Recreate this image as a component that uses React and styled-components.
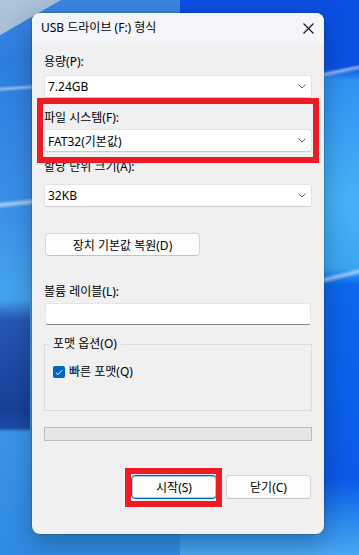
import React from 'react'
import styled, { createGlobalStyle } from 'styled-components'

const GlobalStyle = createGlobalStyle`
  html, body { margin: 0; padding: 0; }
  body { font-family: "Noto Sans", "Noto Sans CJK KR", sans-serif; }
`;

const Desktop = styled.div`
  width: 359px;
  height: 555px;
  overflow: hidden;
  box-sizing: border-box;
  padding: 13px 35px 0 32px;
  background:
    linear-gradient(150deg, #b4c6d8 0, #a6bed8 30px, transparent 31px),
    linear-gradient(176deg, transparent 86px, rgba(255,255,255,0.45) 89px, transparent 92px) left top / 32px 100% no-repeat,
    linear-gradient(174deg, transparent 200px, rgba(255,255,255,0.55) 204px, transparent 208px) left top / 32px 100% no-repeat,
    linear-gradient(to bottom, transparent 300px, #2656b4 320px, #173f98 410px, #1d4aa5 428px, transparent 432px) left top / 30px 100% no-repeat,
    linear-gradient(168deg, transparent 70px, rgba(255,255,255,0.5) 73px, transparent 77px) right top / 36px 100% no-repeat,
    linear-gradient(166deg, transparent 268px, rgba(255,255,255,0.5) 272px, transparent 276px) right top / 36px 100% no-repeat,
    linear-gradient(to bottom, #3b86e2 0, #2d7ddf 60px, #3a8ee8 200px, #45a2ee 290px, #3a95e8 430px, #2f8ae2 555px) left top / 180px 100% no-repeat,
    linear-gradient(to bottom, #0b4fe0 0, #0a52e2 68px, #2f92f2 80px, #45b2f7 200px, #3aa6f3 268px, #0d66ec 285px, #0a5ae8 480px, #2a88ee 520px, #49a6f0 555px) right top / 180px 100% no-repeat;
`;

const Dialog = styled.div`
  width: 292px;
  height: 521px;
  display: flex;
  flex-direction: column;
  background: #f0f0f0;
  border-radius: 8px;
  overflow: hidden;
  box-shadow: 0 8px 24px rgba(0, 0, 0, 0.28), 0 0 0 1px rgba(0, 0, 0, 0.12);
  font-size: 12px;
  color: #000;
`;

const TitleBar = styled.div`
  height: 30px;
  flex-shrink: 0;
  display: flex;
  align-items: center;
  justify-content: space-between;
  padding: 0 10px 0 9px;
  background: #f3f5f8;
  line-height: 16px;
`;

const Body = styled.div`
  flex: 1;
  display: flex;
  flex-direction: column;
  padding: 11px 12px 0 12px;
`;

const Label = styled.div`
  line-height: 16px;
  margin-top: ${p => p.$mt || 0}px;
  margin-bottom: ${p => p.$mb || 0}px;
  white-space: nowrap;
`;

const Select = styled.div`
  height: 23px;
  box-sizing: border-box;
  display: flex;
  align-items: center;
  justify-content: space-between;
  padding: 0 5px 0 3px;
  background: #fff;
  border: 1px solid #e3e3e3;
  border-bottom-color: #cdcdcd;
  border-radius: 3px;
`;

const Highlight = styled.div`
  position: relative;
  margin-top: ${p => p.$mt || 0}px;

  &::after {
    content: '';
    position: absolute;
    left: ${p => p.$l}px;
    right: ${p => p.$r}px;
    top: ${p => p.$t}px;
    bottom: ${p => p.$b}px;
    border: 6px solid #ed1c24;
    pointer-events: none;
    z-index: 1;
  }
`;

const Button = styled.button`
  height: ${p => p.$h || 24}px;
  width: ${p => p.$w}px;
  box-sizing: border-box;
  padding: 0;
  font: inherit;
  color: #000;
  background: #fdfdfd;
  border: 1px solid #d6d6d6;
  border-bottom-color: #c2c2c2;
  border-radius: 4px;
  ${p => p.$primary && `
    border-color: #0067c0;
    box-shadow: inset 0 0 0 1px rgba(0, 103, 192, 0.35);
  `}
`;

const RestoreButton = styled(Button)`
  align-self: flex-start;
  margin: 26px 0 0 1px;
`;

const TextInput = styled.div`
  height: 22px;
  margin-left: 1px;
  width: 266px;
  box-sizing: border-box;
  background: #fff;
  border: 1px solid #e6e6e6;
  border-bottom-color: #8a8a8a;
  border-radius: 3px;
`;

const Group = styled.fieldset`
  margin: 11px 0 0 0;
  padding: 0 0 30px 4px;
  min-width: 0;
  border: 1px solid #dcdcdc;
`;

const Legend = styled.legend`
  padding: 0 4px;
  line-height: 16px;
`;

const CheckRow = styled.div`
  display: flex;
  align-items: center;
  gap: 4px;
  margin: 12px 0 0 4px;
  line-height: 16px;
`;

const CheckBox = styled.span`
  width: 12px;
  height: 12px;
  border-radius: 2px;
  background: #0067c0;
  display: flex;
  align-items: center;
  justify-content: center;
`;

const Progress = styled.div`
  margin-top: 16px;
  height: 14px;
  box-sizing: border-box;
  border: 1px solid #bcbcbc;
  background: #e6e6e6;
`;

const ButtonRow = styled.div`
  margin-top: 34px;
  display: flex;
  justify-content: flex-end;
  gap: 9px;
  padding-right: 1px;
`;

const Chevron = () => (
  <svg width="8" height="5" viewBox="0 0 8 5">
    <path d="M0.5 0.5 L4 4 L7.5 0.5" stroke="#5c5c5c" strokeWidth="1" fill="none" />
  </svg>
)

const CloseIcon = () => (
  <svg width="11" height="11" viewBox="0 0 11 11">
    <path d="M0.5 0.5 L10.5 10.5 M10.5 0.5 L0.5 10.5" stroke="#1a1a1a" strokeWidth="1.2" fill="none" />
  </svg>
)

export default function App() {
  return (
    <>
      <GlobalStyle />
      <Desktop>
        <Dialog>
          <TitleBar>
            <span>USB 드라이브 (F:) 형식</span>
            <CloseIcon />
          </TitleBar>
          <Body>
            <Label $mb={5}>용량(P):</Label>
            <Select>
              <span>7.24GB</span>
              <Chevron />
            </Select>

            <Highlight $mt={12} $l={-7} $r={-7} $t={-12} $b={-11}>
              <Label $mb={3}>파일 시스템(F):</Label>
              <Select>
                <span>FAT32(기본값)</span>
                <Chevron />
              </Select>
            </Highlight>

            <Label $mt={7} $mb={9}>할당 단위 크기(A):</Label>
            <Select>
              <span>32KB</span>
              <Chevron />
            </Select>

            <RestoreButton $w={155} $h={23}>장치 기본값 복원(D)</RestoreButton>

            <Label $mt={28} $mb={3}>볼륨 레이블(L):</Label>
            <TextInput />

            <Group>
              <Legend>포맷 옵션(O)</Legend>
              <CheckRow>
                <CheckBox>
                  <svg width="8" height="7" viewBox="0 0 8 7">
                    <path d="M0.8 3.6 L2.9 5.6 L7.2 1.2" stroke="#fff" strokeWidth="1" fill="none" />
                  </svg>
                </CheckBox>
                <span>빠른 포맷(Q)</span>
              </CheckRow>
            </Group>

            <Progress />

            <ButtonRow>
              <Highlight $l={-6} $r={-5} $t={-7} $b={-8}>
                <Button $w={86} $primary>시작(S)</Button>
              </Highlight>
              <Button $w={85}>닫기(C)</Button>
            </ButtonRow>
          </Body>
        </Dialog>
      </Desktop>
    </>
  )
}
